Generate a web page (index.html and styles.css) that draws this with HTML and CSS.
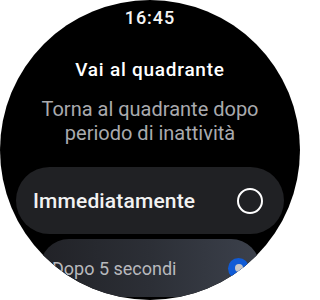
FILE: index.html
```html
<!DOCTYPE html>
<html lang="it">
<head>
<meta charset="utf-8">
<title>Vai al quadrante</title>
<link rel="stylesheet" href="styles.css">
</head>
<body>
<div class="watch">
  <div class="time">16:45</div>
  <h1 class="title">Vai al quadrante</h1>
  <p class="subtitle">Torna al quadrante dopo<br>periodo di inattività</p>
  <div class="list">
    <div class="item">
      <span class="label">Immediatamente</span>
      <span class="radio"></span>
    </div>
    <div class="item item-small">
      <span class="label label-small">Dopo 5 secondi</span>
      <span class="radio radio-on"><span class="dot"></span></span>
    </div>
  </div>
</div>
</body>
</html>
```
FILE: styles.css
```css
html, body {
  margin: 0;
  padding: 0;
  background: #ffffff;
}

body {
  font-family: Roboto, "Noto Sans", "Liberation Sans", sans-serif;
}

.watch {
  width: 300px;
  height: 300px;
  border-radius: 50%;
  background: #000000;
  overflow: hidden;
  display: flex;
  flex-direction: column;
  align-items: center;
}

.time {
  margin-top: 8px;
  font-size: 18px;
  line-height: 20px;
  font-weight: 500;
  letter-spacing: 1px;
  color: #f4f4f4;
}

.title {
  margin: 31px 0 0;
  font-size: 19px;
  line-height: 22px;
  font-weight: 500;
  letter-spacing: 0.75px;
  color: #ffffff;
}

.subtitle {
  margin: 16px 0 0;
  font-size: 20px;
  line-height: 24px;
  text-align: center;
  color: #a9aaae;
}

.list {
  margin-top: 22px;
  display: flex;
  flex-direction: column;
  align-items: center;
  gap: 5px;
}

.item {
  box-sizing: border-box;
  width: 268px;
  height: 67px;
  border-radius: 34px;
  background: #202124;
  display: flex;
  align-items: center;
  justify-content: space-between;
  padding: 0 21px 0 17px;
}

.label {
  font-size: 21px;
  font-weight: 500;
  letter-spacing: 0.15px;
  color: #f2f2f2;
}

.radio {
  box-sizing: border-box;
  width: 26px;
  height: 26px;
  border-radius: 50%;
  border: 2.3px solid #ffffff;
}

.item-small {
  width: 220px;
  height: 58px;
  border-radius: 29px;
  background: linear-gradient(90deg, #212227 0%, #2c2f36 50%, #3c414c 100%);
  padding: 0 11px 0 12px;
}

.label-small {
  font-size: 18px;
  font-weight: 400;
  letter-spacing: 0;
  color: #b8b9bd;
}

.radio-on {
  width: 21px;
  height: 21px;
  border: none;
  background: #105bd6;
  display: flex;
  align-items: center;
  justify-content: center;
}

.dot {
  width: 8px;
  height: 8px;
  border-radius: 50%;
  background: #c6c6c8;
}
```
